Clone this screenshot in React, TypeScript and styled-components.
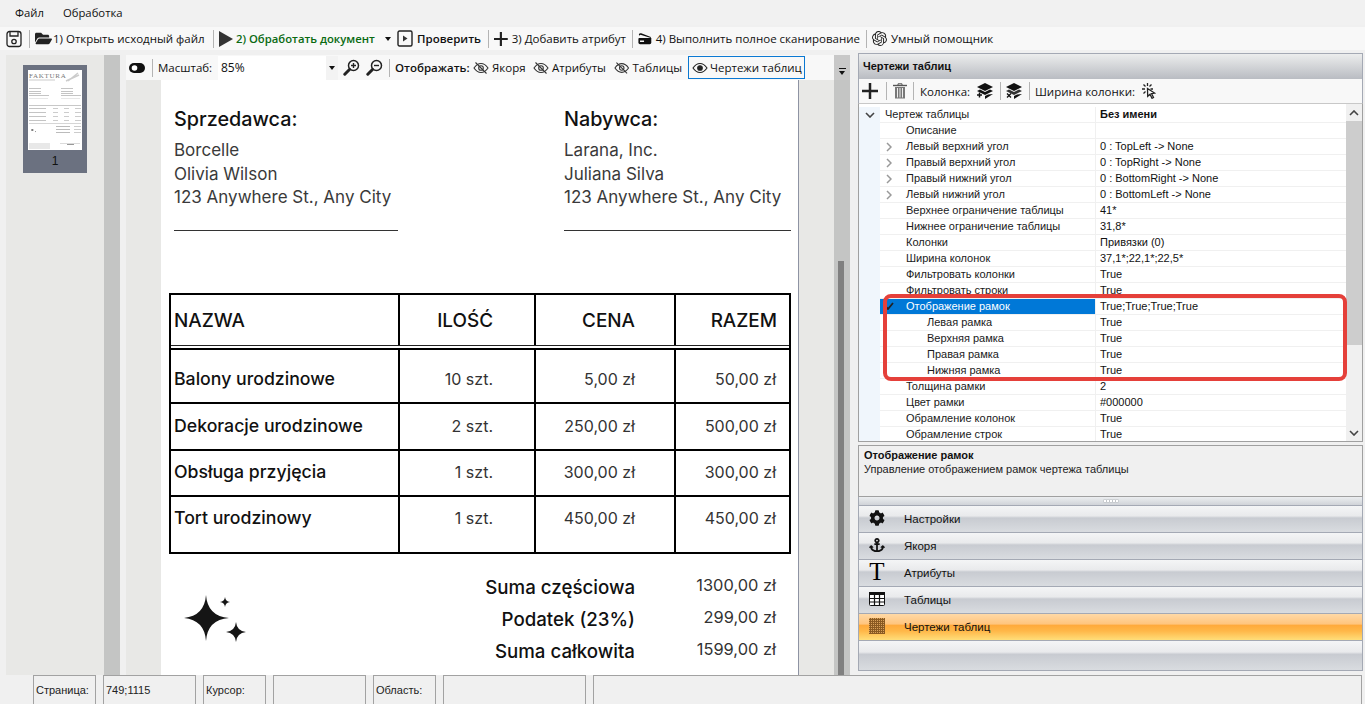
import React from 'react';
import styled, { createGlobalStyle } from 'styled-components';
import { FaFolderOpen, FaCog, FaAnchor } from 'react-icons/fa';
import { SiOpenai } from 'react-icons/si';

const Global = createGlobalStyle`
  html, body { margin: 0; padding: 0; background: #f0f0f0; overflow: hidden; }
  * { box-sizing: border-box; }
`;

const UI = `"Open Sans", "Noto Sans", sans-serif`;
const PS = `"Liberation Sans", Arial, sans-serif`;
const DOC = `Inter, "Noto Sans", sans-serif`;

const Root = styled.div`
  width: 1365px; height: 704px; display: flex; flex-direction: column; background: #f0f0f0;
  font-family: ${UI}; color: #111; overflow: hidden;
`;
const MenuBar = styled.div`
  height: 25px; display: flex; align-items: center; padding-left: 15px; gap: 19px;
  font-size: 11.3px; background: #f1f1f1; flex: none;
`;
const ToolBar = styled.div`
  margin-top: 2px; height: 23px; flex: none; display: flex; align-items: center; padding-left: 6px;
  background: #f8f8f8; font-size: 11.5px;
`;
const Sep = styled.span<{ $l?: number; $r?: number }>`
  width: 1px; height: 18px; background: #b4b4b4; flex: none;
  margin-left: ${p => p.$l ?? 6}px; margin-right: ${p => p.$r ?? 5}px;
`;
const Tool = styled.div<{ $w: number; $g?: number; $ml?: number }>`
  width: ${p => p.$w}px; flex: none; display: flex; align-items: center; gap: ${p => p.$g ?? 3}px;
  margin-left: ${p => p.$ml ?? 0}px; white-space: nowrap;
`;
const Strong = styled.b`font-weight: 600;`;
const Green = styled.b`color: #0a6a12; font-weight: 600; font-size: 11.3px;`;
const Caret = styled.span`
  width: 0; height: 0; border: 3px solid transparent; border-top: 4px solid #111; border-bottom: 0; flex: none;
`;

const Workspace = styled.div`
  flex: 1; min-height: 0; display: flex; padding-left: 6px; padding-top: 3px;
`;
const ThumbColumn = styled.div`
  margin-top: 2px; width: 98px; flex: none; background: #e8e8e6; padding: 10px 0 0 17px;
`;
const ThumbCard = styled.div`
  width: 64px; height: 108px; background: #6b7180; padding: 5px 5px 0; display: flex; flex-direction: column; align-items: center;
  font-family: ${PS}; font-size: 12px; color: #111; gap: 4px;
`;
const MiniSvg = styled.svg`background: #fff; display: block; flex: none;`;
const ThumbTrack = styled.div`
  margin-top: 2px; width: 16px; flex: none; background: #c4c5c4;
`;
const Main = styled.div`
  margin: 2px 0 0 6px; width: 724px; flex: none; display: flex; flex-direction: column; background: #e8e8e6;
`;
const ViewBar = styled.div`
  height: 25px; flex: none; display: flex; align-items: center; background: #f8f8f8; padding-left: 3px; font-size: 11.5px;
`;
const Combo = styled.div`
  width: 120px; height: 24px; flex: none; background: #fff; margin: 0 5px; padding-left: 3px; display: flex; align-items: center;
  justify-content: space-between; font-size: 12px;
`;
const ComboBtn = styled.span`
  width: 12px; height: 100%; background: #f3f3f3; display: flex; align-items: center; justify-content: center;
`;
const ActiveTool = styled.div`
  width: 117px; height: 23px; margin-left: 6px; flex: none; display: flex; align-items: center; gap: 2px; padding-left: 3px;
  border: 1.5px solid #0a78d2; white-space: nowrap;
`;
const Overflow = styled.div`
  width: 16px; height: 25px; margin-left: auto; background: #c8c8c8; display: flex; flex-direction: column; align-items: center; justify-content: flex-end; padding-bottom: 5px; gap: 2px;
`;
const Dash = styled.span`width: 7px; height: 1px; background: #111;`;
const PageRow = styled.div`flex: 1; min-height: 0; display: flex;`;
const PageArea = styled.div`
  flex: 1; min-width: 0; padding-left: 35px; overflow: hidden;
`;
const Page = styled.div`
  width: 638px; height: 100%; background: #fff; border-right: 1px solid #8e93a3; overflow: hidden; font-family: ${DOC}; color: #2e2e2e;
  padding-top: 27px;
`;
const Parties = styled.div`display: grid; grid-template-columns: 390px 227px; padding-left: 13px; height: 186px;`;
const Party = styled.div`display: flex; flex-direction: column;`;
const PartyTitle = styled.div`font-size: 19.8px; font-weight: 500; color: #111; line-height: 24px; margin-bottom: 8px;`;
const PartyLine = styled.div`font-size: 17px; line-height: 23.5px; white-space: nowrap; color: #3a3a3a;`;
const PartyRule = styled.div<{ $w: number }>`width: ${p => p.$w}px; height: 1px; background: #333; margin-top: 20px;`;

const DocTable = styled.div`
  margin-left: 8px; width: 622px; border: 2px solid #000; display: flex; flex-direction: column; background: #fff;
`;
const DocRow = styled.div<{ $h: number; $pt: number; $head?: boolean; $last?: boolean }>`
  height: ${p => p.$h}px; display: grid; grid-template-columns: 229px 136px 140px 1fr;
  border-bottom: ${p => p.$last ? 'none' : p.$head ? '0' : '2px solid #000'};
  font-size: ${p => p.$head ? 18.9 : 16}px;
  > div { padding-top: ${p => p.$pt}px; line-height: 20px; white-space: nowrap; }
`;
const DocName = styled.div<{ $head?: boolean }>`
  padding-left: 3px; font-weight: 500; color: #111; font-size: ${p => p.$head ? 18.9 : 17.7}px;
  border-right: 2px solid #000;
`;
const DocNum = styled.div<{ $pr: number; $head?: boolean; $end?: boolean }>`
  text-align: right; padding-right: ${p => p.$pr}px; font-weight: ${p => p.$head ? 500 : 400}; color: ${p => p.$head ? '#111' : '#333'};
  border-right: ${p => p.$end ? 'none' : '2px solid #000'};
`;
const HeadRule = styled.div`height: 5px; border-top: 1px solid #222; border-bottom: 2px solid #000; display: flex;`;
const SummaryRow = styled.div`
  display: flex; padding: 17px 0 0 23px;
`;
const Sparkles = styled.div`width: 62px; flex: none; padding-top: 22px;`;
const SummaryGrid = styled.div`
  width: 530px; display: grid; grid-template-columns: 389px 141px; grid-auto-rows: 32px; align-items: center;
`;
const SumLabel = styled.div`text-align: right; font-size: 18.7px; font-weight: 500; color: #111; white-space: nowrap;`;
const SumValue = styled.div`text-align: right; font-size: 16.4px; color: #333; white-space: nowrap; position: relative; top: -2px;`;

const PageTrack = styled.div`width: 16px; flex: none; background: #c4c5c4; padding: 181px 0 0 4px;`;
const PageThumb = styled.div`width: 6px; height: 100%; background: #808080;`;

const Side = styled.div`
  margin-left: 8px; width: 505px; flex: none; display: flex; flex-direction: column; font-family: ${PS}; font-size: 11px; height: 618px;
`;
const SideHead = styled.div`
  height: 26px; flex: none; display: flex; align-items: center; padding: 0 0 2px 4px; font-weight: 700; font-size: 11px;
  background: linear-gradient(#eceded, #b9bcc2); border: 1px solid #a4a9b4; border-bottom: 0; color: #111;
`;
const SideBar = styled.div`
  height: 24px; flex: none; display: flex; align-items: center; padding-left: 3px; background: #f8f8f8; border-left: 1px solid #a4a9b4; border-right: 1px solid #a4a9b4;
  font-family: ${UI}; font-size: 11.5px;
`;
const GridFrame = styled.div`
  height: 339px; flex: none; border: 1px solid #a0a0a0; border-top-color: #c8c8c8; background: #fff; display: flex; position: relative; overflow: hidden;
`;
const GridBody = styled.div`flex: 1; min-width: 0; padding-top: 3px;`;
const PropRow = styled.div`
  height: 16px; display: grid; grid-template-columns: 21px 216px 1fr; line-height: 15px; color: #111;
`;
const Gutter = styled.div`background: #f0f6fc; position: relative; display: flex; align-items: center; justify-content: center;`;
const NameCell = styled.div<{ $lvl: number; $sel?: boolean }>`
  padding-left: ${p => 5 + p.$lvl * 21}px; white-space: nowrap; position: relative;
  background: ${p => p.$sel ? '#0078d7' : '#fff'}; color: ${p => p.$sel ? '#fff' : '#1a1a1a'};
  border-bottom: 1px solid #f0f0f0; border-right: 1px solid #f0f0f0;
`;
const Chev = styled.span<{ $l: number }>`position: absolute; left: ${p => p.$l}px; top: 3px; display: flex;`;
const ValueCell = styled.div<{ $bold?: boolean }>`
  padding-left: 4px; white-space: nowrap; font-weight: ${p => p.$bold ? 700 : 400}; border-bottom: 1px solid #f0f0f0; color: #111;
`;
const GridScroll = styled.div`
  width: 16px; flex: none; background: #f0f0f0; display: flex; flex-direction: column; align-items: center;
`;
const ScrollBtn = styled.div`height: 17px; width: 100%; display: flex; align-items: center; justify-content: center; flex: none;`;
const ScrollThumb = styled.div`width: 100%; height: 224px; background: #cdcdcd; flex: none;`;
const ScrollFill = styled.div`flex: 1;`;
const RedFrame = styled.div`
  position: absolute; left: 24px; top: 190px; width: 464px; height: 87px; border: 4px solid #e5403a; border-radius: 8px; pointer-events: none;
`;
const Desc = styled.div`
  margin-top: 3px; height: 52px; flex: none; background: #f0f0f0; border: 1px solid #a0a0a0; padding: 2px 5px; line-height: 14px; color: #222;
`;
const DescTitle = styled.div`font-weight: 700; color: #111;`;
const Splitter = styled.div`
  height: 8px; flex: none; background: linear-gradient(#eceef0, #d0d3d8); border-left: 1px solid #a4a9b4; border-right: 1px solid #a4a9b4;
  display: flex; align-items: center; justify-content: center; gap: 1px;
`;
const Dot = styled.span`width: 2px; height: 2px; background: #fff; box-shadow: 0 0 0 0.5px #b8bbc0;`;
const Accordion = styled.div`
  flex: none; border: 1px solid #a4a9b4; border-top: 0; display: flex; flex-direction: column;
`;
const AccItem = styled.div<{ $active?: boolean; $h?: number }>`
  height: ${p => p.$h ?? 27}px; flex: none; display: grid; grid-template-columns: 45px 1fr; align-items: center; border-top: 1px solid #a4a9b4; color: #111;
  background: ${p => p.$active
    ? 'linear-gradient(#ffd9a6 0%, #ffc57f 38%, #ffaa3c 44%, #ffb748 65%, #ffde7a 100%)'
    : 'linear-gradient(#f4f5f6 0%, #e9eaec 38%, #c8cbd1 46%, #d9dce0 100%)'};
  font-size: 11.5px;
`;
const AccIcon = styled.span`display: flex; justify-content: center; padding-right: 9px; color: #111; margin-top: -3px;`;
const TGlyph = styled.span`font-family: "Liberation Serif", serif; font-size: 25px; line-height: 20px; color: #000;`;

const StatusBar = styled.div`
  height: 29px; margin-top: 0; flex: none; display: flex; padding-left: 33px; gap: 7px; font-family: ${PS}; font-size: 11px; color: #222;
`;
const StatusCell = styled.div<{ $w: number }>`
  width: ${p => p.$w}px; height: 40px; flex: none; border: 1px solid #a2a2a2; padding: 8px 0 0 2px; white-space: nowrap;
`;

/* ---------- icons ---------- */
const SaveIcon = () => (
  <svg width="16" height="18" viewBox="0 0 16 18" fill="none" stroke="#222" strokeWidth="1.3">
    <rect x="1" y="1.5" width="14" height="15" rx="2.5" /><path d="M4 2v4h8V2" /><circle cx="8" cy="11.5" r="2.2" />
  </svg>
);
const PlayIcon = () => <svg width="14" height="18" viewBox="0 0 14 18"><path d="M0 1l14 8L0 17z" fill="#333" /></svg>;
const CheckIcon = () => (
  <svg width="16" height="17" viewBox="0 0 16 17" fill="none"><rect x="1" y="1" width="14" height="15" rx="1.5" stroke="#222" strokeWidth="1.4" /><path d="M6 5.5l4.5 3-4.5 3z" fill="#333" /></svg>
);
const PlusIcon = () => <svg width="16" height="16" viewBox="0 0 16 16"><path d="M6.750 0h2.500v6.750H16v2.500H9.250V16h-2.500V9.250H0v-2.500h6.750z" fill="#222" /></svg>;
const ScanIcon = () => (
  <svg width="17" height="15" viewBox="0 0 17 15"><path d="M1 2.500Q1.500 .5 4 1l12 4.500V7L4 3Q2.500 2.700 2 4z" fill="#111" /><path d="M1 7h15.500v5.500a2 2 0 01-2 2H2.500a2 2 0 01-2-2V8z" fill="#111" /><rect x="2.500" y="10" width="5" height="1.800" fill="#fff" /></svg>
);
const EyeOff = () => (
  <svg width="16" height="14" viewBox="0 0 16 14" fill="none" stroke="#333" strokeWidth="1.1">
    <path d="M1 7c2-3 4.300-4.500 7-4.500S13 4 15 7c-2 3-4.300 4.500-7 4.500S3 10 1 7z" /><circle cx="8" cy="7" r="2.300" /><path d="M2.500 1.500l11 11" />
  </svg>
);
const EyeOn = () => (
  <svg width="16" height="14" viewBox="0 0 16 14" fill="none" stroke="#222" strokeWidth="1.1">
    <path d="M1 7c2-3 4.300-4.500 7-4.500S13 4 15 7c-2 3-4.300 4.500-7 4.500S3 10 1 7z" /><circle cx="8" cy="7" r="2.300" fill="#222" />
  </svg>
);
const ToggleIcon = () => (
  <svg width="16" height="10" viewBox="0 0 16 10"><rect width="16" height="10" rx="5" fill="#111" /><circle cx="5.500" cy="5" r="2.800" fill="#fff" /></svg>
);
const Magnifier = ({ plus }: { plus?: boolean }) => (
  <svg width="17" height="17" viewBox="0 0 17 17" fill="none" stroke="#222">
    <circle cx="10.500" cy="6.500" r="5" strokeWidth="1.500" /><path d="M6.500 10.500L1.800 15.200" strokeWidth="3" strokeLinecap="round" />
    <path d={plus ? 'M8 6.500h5M10.500 4v5' : 'M8 6.500h5'} strokeWidth="1.400" />
  </svg>
);
const TrashIcon = () => (
  <svg width="14" height="16" viewBox="0 0 14 16" fill="none" stroke="#555"><path d="M0 2.500h14" strokeWidth="1.400" /><path d="M5 2V.8h4V2" /><path d="M2 4h10v11.500H2z" fill="#777" stroke="none" /><path d="M4.500 5v9.500M7 5v9.500M9.500 5v9.500" stroke="#eee" /></svg>
);
const Stack = ({ x }: { x?: boolean }) => (
  <svg width="16" height="16" viewBox="0 0 16 16">
    <path d="M8 0l8 4-8 4-8-4z" fill="#111" />
    <path d="M3 6.500l5 2.500 5-2.500 3 1.500-8 4-8-4z" fill={x ? '#333' : '#111'} />
    <path d="M8 13l3-1.500 5-.5-8 5z" fill="#111" />
    {x ? <path d="M1 10.500l4 4M5 10.500l-4 4" stroke="#111" strokeWidth="1.300" /> : <path d="M2.500 9.500v5M0 12h5" stroke="#111" strokeWidth="1.500" />}
  </svg>
);
const ClickIcon = () => (
  <svg width="14" height="16" viewBox="0 0 14 16" fill="none" stroke="#222" strokeWidth="1.300">
    <path d="M5.500 0v3M1.500 1.500l2 2M0 6h3M1.500 10.500l2-2M9.500 1.500l-2 2M11 6H8.500" />
    <path d="M5.500 5.500l7 4.500-3 .5 2 4-1.500.8-2-4-2.300 2z" fill="#fff" />
  </svg>
);
const TableIcon = () => (
  <svg width="16" height="14" viewBox="0 0 16 14" fill="none"><rect x="0.500" y="0.500" width="15" height="13" rx="1" fill="#fff" stroke="#111" /><rect x="0" y="0" width="16" height="3" fill="#111" /><path d="M0 6.500h16M0 10h16M5.500 3v11M10.500 3v11" stroke="#111" strokeWidth="1.200" /></svg>
);
const DraftIcon = () => (
  <svg width="16" height="16" viewBox="0 0 16 16">
    <defs><pattern id="dg" width="2" height="2" patternUnits="userSpaceOnUse"><rect width="2" height="2" fill="#8a5a22" /><rect width="1" height="1" fill="#d9a25a" /></pattern></defs>
    <rect width="16" height="16" fill="url(#dg)" />
  </svg>
);
const Down = ({ c = '#444' }: { c?: string }) => <svg width="10" height="6" viewBox="0 0 10 6" fill="none" stroke={c} strokeWidth="1.600"><path d="M1 1l4 4 4-4" /></svg>;
const Up = () => <svg width="10" height="6" viewBox="0 0 10 6" fill="none" stroke="#444" strokeWidth="1.600"><path d="M1 5l4-4 4 4" /></svg>;
const Right = () => <svg width="6" height="10" viewBox="0 0 6 10" fill="none" stroke="#999" strokeWidth="1.500"><path d="M1 1l4 4-4 4" /></svg>;
const Tick = () => <svg width="10" height="8" viewBox="0 0 10 8" fill="none" stroke="#222" strokeWidth="1.800"><path d="M1 4l3 3 5-6" /></svg>;

const star = (cx: number, cy: number, r: number, k: number) =>
  `M${cx} ${cy - r}Q${cx + k} ${cy - k} ${cx + r} ${cy}Q${cx + k} ${cy + k} ${cx} ${cy + r}Q${cx - k} ${cy + k} ${cx - r} ${cy}Q${cx - k} ${cy - k} ${cx} ${cy - r}z`;
const SparkleIcon = () => (
  <svg width="62" height="52" viewBox="0 0 62 52"><path d={star(22, 25, 23, 1.600)} fill="#151515" /><path d={star(41, 9, 5, 0.500)} fill="#151515" /><path d={star(52, 39, 10, 0.900)} fill="#151515" /></svg>
);
const MiniPage = () => (
  <MiniSvg width="54" height="80" viewBox="0 0 54 80">
    <text x="1" y="8" fontFamily="Liberation Serif, serif" fontSize="7" letterSpacing="0.700" fill="#777">FAKTURA</text>
    <path d="M38 11l13-6M40 11l10-8" stroke="#ccc" strokeWidth="1.500" />
    <rect x="1" y="9.500" width="26" height="1" fill="#ccc" />
    {[18, 21, 23, 25].map(y => <React.Fragment key={y}><rect x="1" y={y} width={y === 25 ? 20 : 12} height="1" fill="#c4c4c4" /><rect x="33" y={y} width={y === 25 ? 20 : 12} height="1" fill="#c4c4c4" /></React.Fragment>)}
    <rect x="1" y="28" width="19" height="0.700" fill="#ddd" /><rect x="33" y="28" width="19" height="0.700" fill="#ddd" />
    <rect x="1" y="35" width="52" height="0.800" fill="#bbb" />
    {[38, 42, 46, 50].map(y => <React.Fragment key={y}><rect x="1" y={y} width="17" height="1" fill="#c4c4c4" /><rect x="25" y={y} width="5" height="1" fill="#ccc" /><rect x="36" y={y} width="5" height="1" fill="#ccc" /><rect x="47" y={y} width="6" height="1" fill="#ccc" /></React.Fragment>)}
    <rect x="1" y="53" width="52" height="0.800" fill="#ccc" />
    {[56, 59, 62].map(y => <React.Fragment key={y}><rect x="28" y={y} width="14" height="1" fill="#bbb" /><rect x="46" y={y} width="7" height="1" fill="#ccc" /></React.Fragment>)}
    <path d="M4 59l2 1-2 1-1-1zM7 61l1 .6-1 .6z" fill="#555" />
    <rect x="1" y="73" width="21" height="6" fill="#e8e8e8" /><rect x="32" y="73" width="20" height="0.700" fill="#ccc" /><rect x="39" y="74" width="7" height="1" fill="#999" />
  </MiniSvg>
);

/* ---------- data ---------- */
type Prop = { n: string; v: string; lvl: number; chev?: 'open' | 'right' | 'tick'; bold?: boolean; sel?: boolean };
const props: Prop[] = [
  { n: 'Чертеж таблицы', v: 'Без имени', lvl: 0, chev: 'open', bold: true },
  { n: 'Описание', v: '', lvl: 1 },
  { n: 'Левый верхний угол', v: '0 : TopLeft -> None', lvl: 1, chev: 'right' },
  { n: 'Правый верхний угол', v: '0 : TopRight -> None', lvl: 1, chev: 'right' },
  { n: 'Правый нижний угол', v: '0 : BottomRight -> None', lvl: 1, chev: 'right' },
  { n: 'Левый нижний угол', v: '0 : BottomLeft -> None', lvl: 1, chev: 'right' },
  { n: 'Верхнее ограничение таблицы', v: '41*', lvl: 1 },
  { n: 'Нижнее ограничение таблицы', v: '31,8*', lvl: 1 },
  { n: 'Колонки', v: 'Привязки (0)', lvl: 1 },
  { n: 'Ширина колонок', v: '37,1*;22,1*;22,5*', lvl: 1 },
  { n: 'Фильтровать колонки', v: 'True', lvl: 1 },
  { n: 'Фильтровать строки', v: 'True', lvl: 1 },
  { n: 'Отображение рамок', v: 'True;True;True;True', lvl: 1, chev: 'tick', sel: true },
  { n: 'Левая рамка', v: 'True', lvl: 2 },
  { n: 'Верхняя рамка', v: 'True', lvl: 2 },
  { n: 'Правая рамка', v: 'True', lvl: 2 },
  { n: 'Нижняя рамка', v: 'True', lvl: 2 },
  { n: 'Толщина рамки', v: '2', lvl: 1 },
  { n: 'Цвет рамки', v: '#000000', lvl: 1 },
  { n: 'Обрамление колонок', v: 'True', lvl: 1 },
  { n: 'Обрамление строк', v: 'True', lvl: 1 },
];
const rows = [
  { h: 54, pt: 19, name: 'Balony urodzinowe', q: '10 szt.', c: '5,00 zł', t: '50,00 zł' },
  { h: 47, pt: 12, name: 'Dekoracje urodzinowe', q: '2 szt.', c: '250,00 zł', t: '500,00 zł' },
  { h: 46, pt: 11, name: 'Obsługa przyjęcia', q: '1 szt.', c: '300,00 zł', t: '300,00 zł' },
  { h: 55, pt: 11, name: 'Tort urodzinowy', q: '1 szt.', c: '450,00 zł', t: '450,00 zł', last: true },
];

export default function App() {
  return (
    <Root>
      <Global />
      <MenuBar><span>Файл</span><span>Обработка</span></MenuBar>
      <ToolBar>
        <Tool $w={17}><SaveIcon /></Tool>
        <Sep />
        <Tool $w={172} $g={1}><FaFolderOpen size={17} color="#222" /><span>1) Открыть исходный файл</span></Tool>
        <Sep />
        <Tool $w={166}><PlayIcon /><Green>2) Обработать документ</Green></Tool>
        <Caret />
        <Tool $w={85} $g={4} $ml={6}><CheckIcon /><Strong>Проверить</Strong></Tool>
        <Sep />
        <Tool $w={132} $g={4}><PlusIcon /><span>3) Добавить атрибут</span></Tool>
        <Sep />
        <Tool $w={222} $g={4}><ScanIcon /><span>4) Выполнить полное сканирование</span></Tool>
        <Sep />
        <Tool $w={130} $g={4}><SiOpenai size={15} color="#222" /><span>Умный помощник</span></Tool>
      </ToolBar>
      <Workspace>
        <ThumbColumn>
          <ThumbCard><MiniPage /><span>1</span></ThumbCard>
        </ThumbColumn>
        <ThumbTrack />
        <Main>
          <ViewBar>
            <Tool $w={17}><ToggleIcon /></Tool>
            <Sep />
            <Tool $w={55}><span>Масштаб:</span></Tool>
            <Combo><span>85%</span><ComboBtn><Caret /></ComboBtn></Combo>
            <Tool $w={23}><Magnifier plus /></Tool>
            <Tool $w={23}><Magnifier /></Tool>
            <Sep $l={0} />
            <Tool $w={78}><Strong>Отображать:</Strong></Tool>
            <Tool $w={60}><EyeOff /><span>Якоря</span></Tool>
            <Tool $w={81}><EyeOff /><span>Атрибуты</span></Tool>
            <Tool $w={68}><EyeOff /><span>Таблицы</span></Tool>
            <ActiveTool><EyeOn /><span>Чертежи таблиц</span></ActiveTool>
            <Overflow><Dash /><Caret /></Overflow>
          </ViewBar>
          <PageRow>
            <PageArea>
              <Page>
                <Parties>
                  <Party>
                    <PartyTitle>Sprzedawca:</PartyTitle>
                    <PartyLine>Borcelle</PartyLine>
                    <PartyLine>Olivia Wilson</PartyLine>
                    <PartyLine>123 Anywhere St., Any City</PartyLine>
                    <PartyRule $w={224} />
                  </Party>
                  <Party>
                    <PartyTitle>Nabywca:</PartyTitle>
                    <PartyLine>Larana, Inc.</PartyLine>
                    <PartyLine>Juliana Silva</PartyLine>
                    <PartyLine>123 Anywhere St., Any City</PartyLine>
                    <PartyRule $w={227} />
                  </Party>
                </Parties>
                <DocTable>
                  <DocRow $h={50} $pt={16} $head>
                    <DocName $head>NAZWA</DocName>
                    <DocNum $pr={41} $head>ILOŚĆ</DocNum>
                    <DocNum $pr={39} $head>CENA</DocNum>
                    <DocNum $pr={12} $head $end>RAZEM</DocNum>
                  </DocRow>
                  <HeadRule />
                  {rows.map(r => (
                    <DocRow key={r.name} $h={r.h} $pt={r.pt} $last={r.last}>
                      <DocName>{r.name}</DocName>
                      <DocNum $pr={41}>{r.q}</DocNum>
                      <DocNum $pr={39}>{r.c}</DocNum>
                      <DocNum $pr={13} $end>{r.t}</DocNum>
                    </DocRow>
                  ))}
                </DocTable>
                <SummaryRow>
                  <Sparkles><SparkleIcon /></Sparkles>
                  <SummaryGrid>
                    <SumLabel>Suma częściowa</SumLabel><SumValue>1300,00 zł</SumValue>
                    <SumLabel>Podatek (23%)</SumLabel><SumValue>299,00 zł</SumValue>
                    <SumLabel>Suma całkowita</SumLabel><SumValue>1599,00 zł</SumValue>
                  </SummaryGrid>
                </SummaryRow>
              </Page>
            </PageArea>
            <PageTrack><PageThumb /></PageTrack>
          </PageRow>
        </Main>
        <Side>
          <SideHead>Чертежи таблиц</SideHead>
          <SideBar>
            <Tool $w={22}><PlusIcon /></Tool>
            <Sep $l={2} $r={6} />
            <Tool $w={19}><TrashIcon /></Tool>
            <Sep $l={1} $r={6} />
            <Tool $w={57}><span>Колонка:</span></Tool>
            <Tool $w={21}><Stack /></Tool>
            <Sep $l={2} $r={5} />
            <Tool $w={20}><Stack x /></Tool>
            <Sep $l={3} $r={5} />
            <Tool $w={107}><span>Ширина колонки:</span></Tool>
            <Tool $w={16}><ClickIcon /></Tool>
          </SideBar>
          <GridFrame>
            <GridBody>
              {props.map(p => (
                <PropRow key={p.n}>
                  <Gutter>{p.chev === 'open' && <Down />}</Gutter>
                  <NameCell $lvl={p.lvl} $sel={p.sel}>
                    {p.chev === 'right' && <Chev $l={6}><Right /></Chev>}
                    {p.chev === 'tick' && <Chev $l={4}><Tick /></Chev>}
                    {p.n}
                  </NameCell>
                  <ValueCell $bold={p.bold}>{p.v}</ValueCell>
                </PropRow>
              ))}
            </GridBody>
            <GridScroll>
              <ScrollBtn><Up /></ScrollBtn>
              <ScrollThumb />
              <ScrollFill />
              <ScrollBtn><Down /></ScrollBtn>
            </GridScroll>
            <RedFrame />
          </GridFrame>
          <Desc>
            <DescTitle>Отображение рамок</DescTitle>
            <div>Управление отображением рамок чертежа таблицы</div>
          </Desc>
          <Splitter><Dot /><Dot /><Dot /><Dot /><Dot /></Splitter>
          <Accordion>
            <AccItem><AccIcon><FaCog size={16} /></AccIcon><span>Настройки</span></AccItem>
            <AccItem><AccIcon><FaAnchor size={16} /></AccIcon><span>Якоря</span></AccItem>
            <AccItem><AccIcon><TGlyph>T</TGlyph></AccIcon><span>Атрибуты</span></AccItem>
            <AccItem><AccIcon><TableIcon /></AccIcon><span>Таблицы</span></AccItem>
            <AccItem $active><AccIcon><DraftIcon /></AccIcon><span>Чертежи таблиц</span></AccItem>
            <AccItem $h={30} />
          </Accordion>
        </Side>
      </Workspace>
      <StatusBar>
        <StatusCell $w={63}>Страница:</StatusCell>
        <StatusCell $w={93}>749;1115</StatusCell>
        <StatusCell $w={63}>Курсор:</StatusCell>
        <StatusCell $w={93} />
        <StatusCell $w={63}>Область:</StatusCell>
        <StatusCell $w={143} />
        <StatusCell $w={769} />
      </StatusBar>
    </Root>
  );
}
